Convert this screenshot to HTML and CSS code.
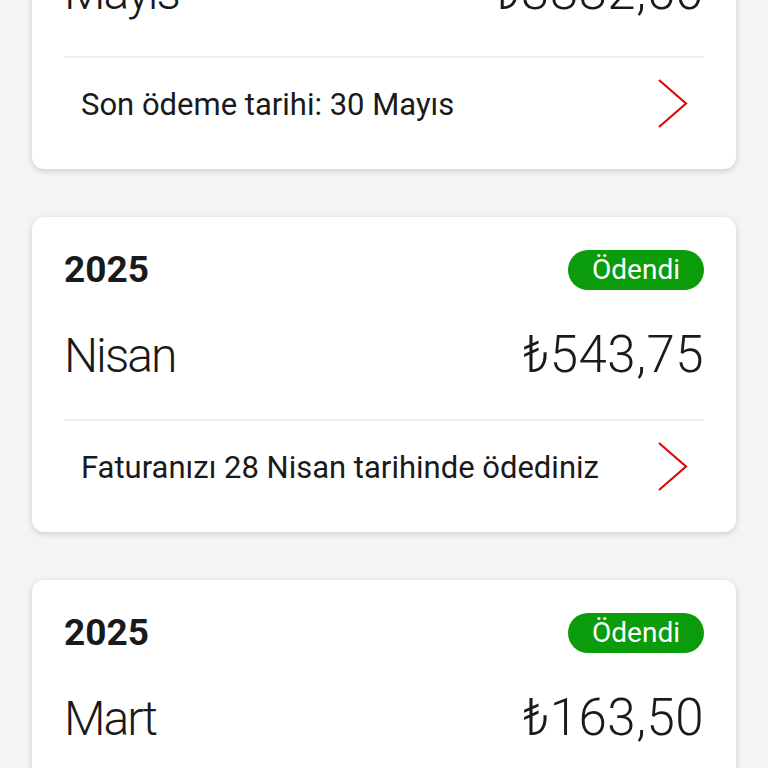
FILE: index.html
```html
<!DOCTYPE html>
<html lang="tr">
<head>
  <meta charset="UTF-8"/>
  <meta name="viewport" content="width=device-width,initial-scale=1"/>
  <title>Faturalarım</title>
  <link rel="stylesheet" href="styles.css">
</head>
<body>

<main class="bills">

  <!-- Mayıs -->
  <section class="card">
    <div class="card-head">
      <span class="year">2025</span>
      <span class="badge due">Ödenmedi</span>
    </div>
    <div class="card-amount">
      <span class="month">Mayıs</span>
      <span class="price">₺3882,50</span>
    </div>
    <a class="card-foot" href="#">
      <span>Son ödeme tarihi: 30 Mayıs</span>
      <svg class="chev" viewBox="0 0 30 50" width="30" height="50"><path d="M1 1 L28 24.5 L1 48"/></svg>
    </a>
  </section>

  <!-- Nisan -->
  <section class="card">
    <div class="card-head">
      <span class="year">2025</span>
      <span class="badge">Ödendi</span>
    </div>
    <div class="card-amount">
      <span class="month">Nisan</span>
      <span class="price">₺543,75</span>
    </div>
    <a class="card-foot" href="#">
      <span>Faturanızı 28 Nisan tarihinde ödediniz</span>
      <svg class="chev" viewBox="0 0 30 50" width="30" height="50"><path d="M1 1 L28 24.5 L1 48"/></svg>
    </a>
  </section>

  <!-- Mart -->
  <section class="card">
    <div class="card-head">
      <span class="year">2025</span>
      <span class="badge">Ödendi</span>
    </div>
    <div class="card-amount">
      <span class="month">Mart</span>
      <span class="price">₺163,50</span>
    </div>
    <a class="card-foot" href="#">
      <span>Faturanızı 27 Mart tarihinde ödediniz</span>
      <svg class="chev" viewBox="0 0 30 50" width="30" height="50"><path d="M1 1 L28 24.5 L1 48"/></svg>
    </a>
  </section>

</main>

</body>
</html>
```

FILE: styles.css
```css
*{box-sizing:border-box}
body{margin:0;background:#f4f4f4;color:#1a1a1a;font-family:Roboto,"Noto Sans",sans-serif;overflow:hidden}

/* list is scrolled down a bit, first card is cut at the top */
.bills{display:flex;flex-direction:column;gap:48px;padding:0 32px;margin-top:-146px}

.card{background:#fff;border-radius:12px;box-shadow:0 2px 6px rgba(0,0,0,.16);padding:33px 32px 19px}

.card-head{display:flex;justify-content:space-between;align-items:center;height:40px}
.year{font-size:37px;font-weight:700;line-height:40px}
.badge{height:40px;line-height:40px;padding:0 24px;border-radius:20px;background:#0a9c0a;color:#fff;font-size:28px}
.badge.due{background:#e60000}

.card-amount{display:flex;justify-content:space-between;align-items:baseline;margin-top:37px;padding-bottom:35px;border-bottom:2px solid #ededed;font-weight:300;line-height:56px}
.month{font-size:48px;letter-spacing:-2px}
.price{font-size:51px;letter-spacing:.5px}

.card-foot{display:flex;justify-content:space-between;align-items:center;height:92px;padding:0 16px 0 17px;color:inherit;text-decoration:none;font-size:31px}
.chev{width:30px;height:50px;fill:none;stroke:#dc0a0a;stroke-width:2.2}
```
